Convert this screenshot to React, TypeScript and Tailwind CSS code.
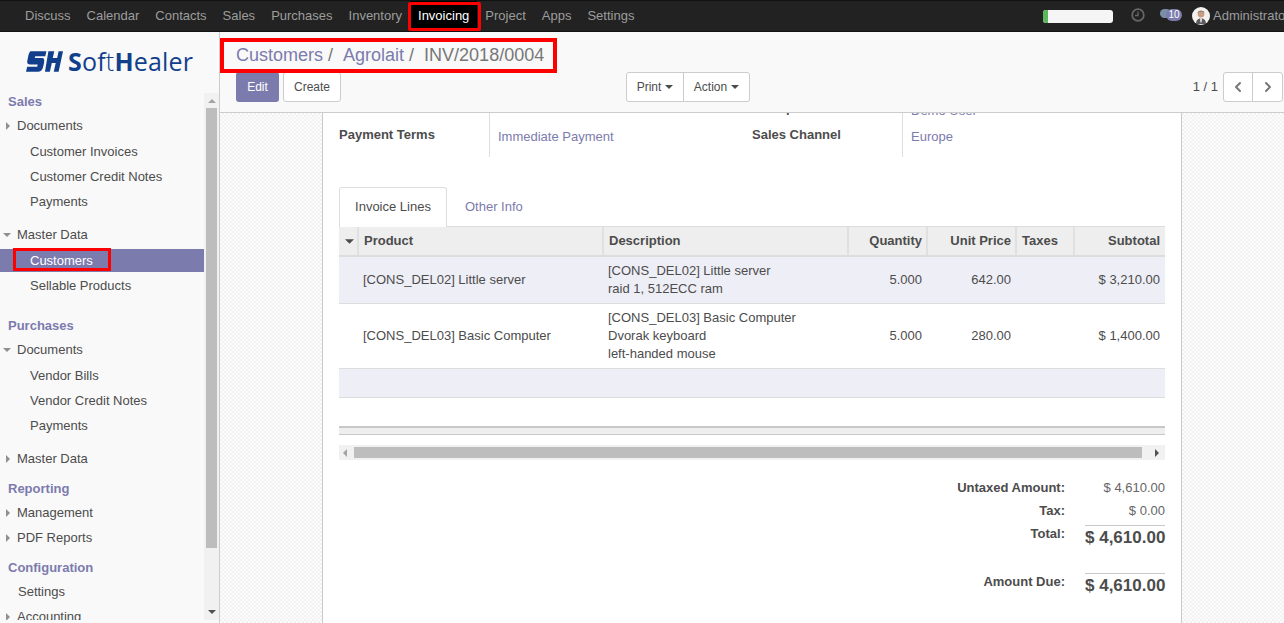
import { ChevronLeft, ChevronRight } from "lucide-react";

const NAV_ITEMS = ["Discuss", "Calendar", "Contacts", "Sales", "Purchases", "Inventory", "Invoicing", "Project", "Apps", "Settings"];

type SideRow = { label: string; kind: "head" | "parent" | "open" | "leaf" | "plain" | "active"; cls: string };

const SIDE_ROWS: SideRow[] = [
  { label: "Sales", kind: "head", cls: "" },
  { label: "Documents", kind: "parent", cls: "-mt-px" },
  { label: "Customer Invoices", kind: "leaf", cls: "mt-px" },
  { label: "Customer Credit Notes", kind: "leaf", cls: "" },
  { label: "Payments", kind: "leaf", cls: "" },
  { label: "Master Data", kind: "open", cls: "mt-2" },
  { label: "Customers", kind: "active", cls: "mt-px" },
  { label: "Sellable Products", kind: "leaf", cls: "" },
  { label: "Purchases", kind: "head", cls: "mt-[15px]" },
  { label: "Documents", kind: "open", cls: "-mt-px" },
  { label: "Vendor Bills", kind: "leaf", cls: "mt-px" },
  { label: "Vendor Credit Notes", kind: "leaf", cls: "" },
  { label: "Payments", kind: "leaf", cls: "" },
  { label: "Master Data", kind: "parent", cls: "mt-2" },
  { label: "Reporting", kind: "head", cls: "mt-[5px]" },
  { label: "Management", kind: "parent", cls: "-mt-px" },
  { label: "PDF Reports", kind: "parent", cls: "" },
  { label: "Configuration", kind: "head", cls: "mt-[5px]" },
  { label: "Settings", kind: "plain", cls: "-mt-px" },
  { label: "Accounting", kind: "parent", cls: "" },
];

const COLS = "grid grid-cols-[20px_245px_245px_79px_89px_58px_90px]";

function Caret({ dir, className }: { dir: "down" | "right" | "left" | "up"; className: string }) {
  const pts = { down: "0,0 8,0 4,4", up: "0,4 8,4 4,0", right: "0,0 4,4 0,8", left: "4,0 0,4 4,8" }[dir];
  const box = dir === "down" || dir === "up" ? "0 0 8 4" : "0 0 4 8";
  return (
    <svg viewBox={box} className={className} fill="currentColor">
      <polygon points={pts} />
    </svg>
  );
}

function SideItem({ row }: { row: SideRow }) {
  if (row.kind === "head") {
    return <div className={`h-[25px] pl-2 flex items-center font-bold text-[#7c7bad] ${row.cls}`}>{row.label}</div>;
  }
  if (row.kind === "active") {
    return (
      <div className={`h-[25px] py-px ${row.cls}`}>
        <div className="relative h-[23px] pl-[30px] flex items-center bg-[#7c7bad] text-white">
          {row.label}
          <div className="absolute left-[13px] top-[-1px] w-[98px] h-[23px] border-[3px] border-[#f00]" />
        </div>
      </div>
    );
  }
  const indent = row.kind === "leaf" ? "pl-[30px]" : row.kind === "plain" ? "pl-[18px]" : "pl-[17px]";
  return (
    <div className={`relative h-[25px] flex items-center text-[#4c4c4c] ${indent} ${row.cls}`}>
      {row.kind === "parent" && <Caret dir="right" className="absolute left-[6px] top-[9px] w-1 h-2 text-[#8f8f8f]" />}
      {row.kind === "open" && <Caret dir="down" className="absolute left-[3px] top-[11px] w-2 h-1 text-[#8f8f8f]" />}
      {row.label}
    </div>
  );
}

function Logo() {
  return (
    <div className="h-[61px] flex items-center pl-[26px] pb-[2px]">
      <svg viewBox="0 0 38 21" className="w-[37px] h-[21px] mr-[5px]" fill="#123f8c">
        <path d="M5 0H21L19.800 5H9.500L9 7H16C19 7 19 9 18.500 12L17.800 15C17.200 19 15 21 12 21H0L1.200 16H11.500L12 13.500H4C1 13.500 1 11 1.500 9L2.500 4C3 2 4 0 5 0Z" />
        <path d="M23 0H29L27.500 7H32L33.500 0H38L33.500 21H28.500L30.500 12H26.500L24.500 21H19.500Z" />
      </svg>
      <span className="font-['Open_Sans',sans-serif] text-[25px] leading-none text-[#123f8c] tracking-[0.2px] whitespace-nowrap">
        <span className="font-bold">S</span>of
        <span className="font-light">t</span>
        <span className="font-bold">H</span>ealer
      </span>
    </div>
  );
}

function TotalRow({ label, value, big, cls }: { label: string; value: string; big?: boolean; cls: string }) {
  return (
    <div className={`flex justify-end ${cls}`}>
      <div className={`font-bold text-[#4c4c4c] text-right ${big ? "pt-px" : ""}`}>{label}</div>
      <div className={`w-[80px] ml-5 text-right whitespace-nowrap ${big ? "border-t border-[#c8c8c8] font-bold text-[17px] leading-[24px] text-[#4c4c4c]" : "text-[#666]"}`}>{value}</div>
    </div>
  );
}

export default function App() {
  return (
    <div className="h-[623px] w-[1284px] overflow-hidden flex flex-col bg-white font-['Liberation_Sans',Arial,sans-serif] text-[13px] text-[#4c4c4c]">
      <header className="h-8 shrink-0 flex items-center bg-[#222] border-y border-[#111] pl-[17px]">
        <nav className="flex items-center h-full">
          {NAV_ITEMS.map((item) =>
            item === "Invoicing" ? (
              <span key={item} className="relative h-full px-2 flex items-center bg-black text-white">
                {item}
                <span className="absolute left-[-2px] right-[-4px] top-px bottom-0 border-[3px] border-[#f00] rounded-[2px]" />
              </span>
            ) : (
              <span key={item} className="px-2 text-[#9d9d9d]">
                {item}
              </span>
            )
          )}
        </nav>
        <div className="ml-auto flex items-center text-[#9d9d9d]">
          <div className="w-[70px] h-[13px] rounded-[3px] bg-[#f5f5f5] overflow-hidden mr-[18px]">
            <div className="w-[5px] h-full bg-[#5cb85c]" />
          </div>
          <svg viewBox="0 0 14 14" className="w-[14px] h-[14px] mr-[15px] mb-[3px]" fill="none" stroke="#666" strokeWidth="1.800">
            <circle cx="7" cy="7" r="5.800" />
            <path d="M7 3.500V7.500H4" strokeWidth="1.300" />
          </svg>
          <div className="relative w-[22px] h-[14px] mr-[10px] mb-px">
            <div className="absolute left-0 top-0 w-[11px] h-[9px] rounded-full bg-[#7a8fa5]" />
            <div className="absolute right-0 top-0 w-[16px] h-[12px] rounded-full bg-[#7c7bad] text-white text-[10px] leading-[12px] text-center">10</div>
          </div>
          <svg viewBox="0 0 18 18" className="w-[18px] h-[18px] mr-[3px]">
            <circle cx="9" cy="9" r="9" fill="#f4f1ee" />
            <circle cx="9" cy="7" r="3.400" fill="#c99c84" />
            <path d="M5.500 6c0-3 7-3 7 0-1.500-1.200-5.500-1.200-7 0z" fill="#8c8683" />
            <path d="M4 17c0-4 2-5.500 5-5.500s5 1.500 5 5.500z" fill="#5c5a5c" />
            <path d="M8 11.500h2l-.5 4h-1z" fill="#f4f1ee" />
          </svg>
          <span className="w-[71px] overflow-hidden whitespace-nowrap">Administrator</span>
        </div>
      </header>

      <div className="flex-1 min-h-0 flex">
        <aside className="w-[220px] shrink-0 bg-[#f9f9f9] border-r border-[#ccc] flex flex-col">
          <Logo />
          <div className="h-[527px] flex overflow-hidden">
            <div className="w-[204px] shrink-0 overflow-hidden">
              <div className="-mt-1">
                {SIDE_ROWS.map((row, i) => (
                  <SideItem key={i} row={row} />
                ))}
              </div>
            </div>
            <div className="w-[15px] shrink-0 bg-[#f1f1f1] flex flex-col items-center">
              <Caret dir="up" className="w-2 h-1 mt-[6px] mb-[5px] text-[#a3a3a3]" />
              <div className="w-[11px] h-[440px] bg-[#bdbdbd] shrink-0" />
              <Caret dir="down" className="w-2 h-1 mt-[62px] text-[#505050]" />
            </div>
          </div>
        </aside>

        <main className="flex-1 min-w-0 flex flex-col">
          <div className="h-[81px] shrink-0 bg-[#f9f9f9] border-b border-[#ccc] relative pl-4 pr-px">
            <div className="absolute left-0 top-[6px] w-[337px] h-[35px] border-[4px] border-[#f00] pl-3 flex items-center text-[18px] text-[#777] whitespace-nowrap">
              <span className="text-[#7c7bad]">Customers</span>
              <span className="ml-[5px]">/</span>
              <span className="text-[#7c7bad] ml-[10px]">Agrolait</span>
              <span className="ml-[5px]">/</span>
              <span className="ml-[10px]">INV/2018/0004</span>
            </div>
            <div className="pt-10 flex items-start">
              <button className="w-[43px] h-[30px] rounded-[3px] bg-[#7c7bad] text-white text-[12px]">Edit</button>
              <button className="w-[58px] h-[30px] ml-1 rounded-[3px] bg-white border border-[#ccc] text-[#4c4c4c] text-[12px]">Create</button>
              <div className="ml-[285px] h-[30px] flex rounded-[3px] border border-[#ccc] bg-white text-[12px]">
                <div className="w-[57px] flex items-center justify-center gap-1 border-r border-[#ccc]">
                  Print <Caret dir="down" className="w-2 h-1 text-[#4c4c4c]" />
                </div>
                <div className="w-[65px] flex items-center justify-center gap-1">
                  Action <Caret dir="down" className="w-2 h-1 text-[#4c4c4c]" />
                </div>
              </div>
              <div className="ml-auto flex items-center h-[30px]">
                <span className="mr-[5px] text-[#4c4c4c]">1 / 1</span>
                <div className="h-[30px] flex rounded-[3px] border border-[#ccc] bg-white text-[#777]">
                  <div className="w-[29px] flex items-center justify-center border-r border-[#ccc]">
                    <ChevronLeft size={16} strokeWidth={3} />
                  </div>
                  <div className="w-[29px] flex items-center justify-center">
                    <ChevronRight size={16} strokeWidth={3} />
                  </div>
                </div>
              </div>
            </div>
          </div>

          <div className="flex-1 min-h-0 overflow-hidden flex justify-center bg-[#f8f8f8] bg-[conic-gradient(#f2f2f2_25%,#fcfcfc_0_50%,#f2f2f2_0_75%,#fcfcfc_0)] bg-[length:4px_4px]">
            <div className="w-[860px] h-full bg-white border-x border-[#c8c8d0] px-4 overflow-hidden">
              <div className="flex h-5 -mt-5 leading-[15px]">
                <div className="w-[150px]" />
                <div className="w-[263px] border-l border-[#ddd]" />
                <div className="w-[150px] pt-[7px] font-bold">Salesperson</div>
                <div className="border-l border-[#ddd] pl-2 pt-[10px] text-[#7c7bad]">Demo User</div>
              </div>
              <div className="flex h-[44px]">
                <div className="w-[150px] pt-[14px] font-bold leading-[15px]">Payment Terms</div>
                <div className="w-[263px] border-l border-[#ddd] pl-2 pt-[16px] text-[#7c7bad] leading-[15px]">Immediate Payment</div>
                <div className="w-[150px] pt-[14px] font-bold leading-[15px]">Sales Channel</div>
                <div className="border-l border-[#ddd] pl-2 pt-[16px] text-[#7c7bad] leading-[15px]">Europe</div>
              </div>

              <div className="flex mt-[30px] h-[39px]">
                <div className="w-[108px] h-10 bg-white border border-b-0 border-[#ddd] rounded-t-[3px] flex items-center justify-center pb-px relative z-10">Invoice Lines</div>
                <div className="ml-[18px] h-10 flex items-center pb-px text-[#7c7bad]">Other Info</div>
              </div>

              <div className={`${COLS} h-[31px] bg-[#eee] border-t border-b-2 border-[#ddd] font-bold items-stretch`}>
                <div className="flex items-center justify-center pl-[3px] border-r-2 border-[#e0e0e0] text-[#4c4c4c]">
                  <Caret dir="down" className="w-[9px] h-[5px]" />
                </div>
                <div className="flex items-center px-[5px] border-r-2 border-[#e0e0e0]">Product</div>
                <div className="flex items-center px-[5px] border-r-2 border-[#e0e0e0]">Description</div>
                <div className="flex items-center justify-end pr-1 border-r-2 border-[#e0e0e0]">Quantity</div>
                <div className="flex items-center justify-end pr-1 border-r-2 border-[#e0e0e0]">Unit Price</div>
                <div className="flex items-center px-[5px] border-r-2 border-[#e0e0e0]">Taxes</div>
                <div className="flex items-center justify-end px-[5px]">Subtotal</div>
              </div>

              <div className={`${COLS} h-[47px] bg-[#eeeef6] border-b border-[#ddd] items-center leading-[18px]`}>
                <div />
                <div className="px-1">[CONS_DEL02] Little server</div>
                <div className="px-1">
                  [CONS_DEL02] Little server
                  <br />
                  raid 1, 512ECC ram
                </div>
                <div className="pr-[6px] text-right">5.000</div>
                <div className="pr-[6px] text-right">642.00</div>
                <div />
                <div className="px-[5px] text-right">$ 3,210.00</div>
              </div>
              <div className={`${COLS} h-[65px] border-b border-[#ddd] items-center leading-[18px]`}>
                <div />
                <div className="px-1">[CONS_DEL03] Basic Computer</div>
                <div className="px-1">
                  [CONS_DEL03] Basic Computer
                  <br />
                  Dvorak keyboard
                  <br />
                  left-handed mouse
                </div>
                <div className="pr-[6px] text-right">5.000</div>
                <div className="pr-[6px] text-right">280.00</div>
                <div />
                <div className="px-[5px] text-right">$ 1,400.00</div>
              </div>
              <div className="h-[29px] bg-[#eeeef6] border-b border-[#ddd]" />
              <div className="h-[9px] mt-[28px] bg-[#eee] border-t-2 border-b border-[#c8c8c8]" />

              <div className="h-[15px] mt-[10px] bg-[#f1f1f1] flex items-center">
                <Caret dir="left" className="w-1 h-2 ml-[4px] text-[#a3a3a3]" />
                <div className="w-[788px] h-[11px] ml-[7px] bg-[#bdbdbd]" />
                <Caret dir="right" className="w-1 h-2 ml-[13px] text-[#505050]" />
              </div>

              <div className="mt-5 leading-[15px]">
                <TotalRow label="Untaxed Amount:" value="$ 4,610.00" cls="" />
                <TotalRow label="Tax:" value="$ 0.00" cls="mt-2" />
                <TotalRow label="Total:" value="$ 4,610.00" big cls="mt-[7px]" />
                <TotalRow label="Amount Due:" value="$ 4,610.00" big cls="mt-[23px]" />
              </div>
            </div>
          </div>
        </main>
      </div>
    </div>
  );
}
